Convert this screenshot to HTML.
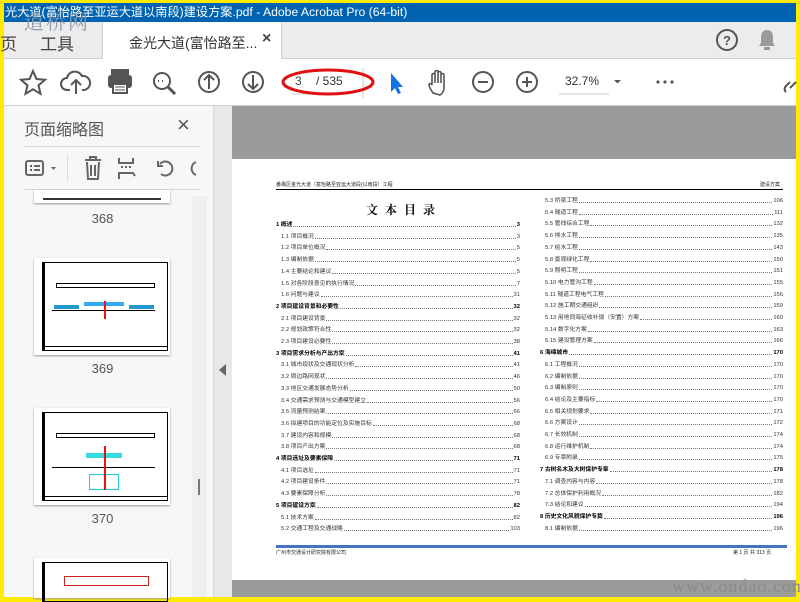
<!DOCTYPE html>
<html><head><meta charset="utf-8">
<style>
*{margin:0;padding:0;box-sizing:border-box}
body{width:800px;height:600px;overflow:hidden;background:#ffeb00;position:relative;font-family:"Liberation Sans","Noto Sans CJK SC",sans-serif}
.a{position:absolute}
.title{left:4px;top:3px;width:792px;height:19px;background:#0063b1;color:#fff;font-size:12.2px;line-height:18px;white-space:nowrap;overflow:hidden;padding-left:1px}
.tabs{left:4px;top:22px;width:792px;height:37px;background:#ececec;border-bottom:1px solid #d0d0d0}
.tool{left:4px;top:59px;width:792px;height:47px;background:#fff;border-bottom:1px solid #cfcfcf}
.panel{left:4px;top:106px;width:209px;height:491px;background:#f7f7f7}
.gut{left:213px;top:106px;width:19px;height:491px;background:#e8e8e8;border-left:1px solid #d8d8d8}
.doc{left:232px;top:106px;width:564px;height:491px;background:#9b9b9b}
.page{left:232px;top:159px;width:564px;height:421px;background:#fff}
.t{font-size:5.6px;color:#222;white-space:nowrap}
.row{position:absolute;display:flex;font-size:5.8px;color:#333;height:7px;line-height:7px;white-space:nowrap}
.row .f{flex:1;border-bottom:1px dotted #777;margin:0 1px 2px}
.row.b{font-weight:bold;color:#000}
.thumb{position:absolute;left:34px;width:136px;height:97px;background:#fff;box-shadow:0 1px 2px #999}
.lbl{position:absolute;left:80px;width:45px;text-align:center;font-size:13px;color:#555}
svg{position:absolute}
</style></head><body>
<div class="a title">光大道(富怡路至亚运大道以南段)建设方案.pdf - Adobe Acrobat Pro (64-bit)</div>
<div class="a tabs"></div>
<div class="a" style="left:24px;top:6px;font-size:20px;color:#8c9aa8;letter-spacing:2px;font-family:'Noto Serif CJK SC',serif">道桥网</div>
<div class="a" style="left:0;top:30px;font-size:17px;color:#444">页</div>
<div class="a" style="left:40px;top:30px;font-size:17px;color:#444">工具</div>
<div class="a" style="left:102px;top:22px;width:180px;height:38px;background:#fff;border-left:1px solid #d0d0d0;border-right:1px solid #d0d0d0"></div>
<div class="a" style="left:129px;top:33px;font-size:14px;color:#333">金光大道(富怡路至...</div>
<div class="a" style="left:262px;top:30px;font-size:16px;color:#444;font-weight:bold">×</div>
<svg style="left:714px;top:27px" width="26" height="26"><circle cx="13" cy="13" r="10" fill="none" stroke="#555" stroke-width="2"/><text x="13" y="18" font-size="13" font-weight="bold" text-anchor="middle" fill="#555" font-family="Liberation Sans">?</text></svg>
<svg style="left:757px;top:28px" width="20" height="24"><path d="M10 2c-4 0-6 3-6 7v6l-2 3h16l-2-3V9c0-4-2-7-6-7z" fill="#9a9a9a"/><rect x="7" y="19" width="6" height="3" fill="#9a9a9a"/></svg>
<div class="a tool"></div>
<svg style="left:0;top:62px" width="800" height="42" fill="none" stroke="#555" stroke-width="2">
<path d="M33 9l3.5 8 8.5.8-6.5 5.6 2 8.4-7.5-4.5-7.5 4.5 2-8.4-6.5-5.6 8.5-.8z"/>
<path d="M70 28h-3a6 6 0 0 1 0-12 8 8 0 0 1 15-2 6 6 0 0 1 2 14h-2M76 32V18M71 23l5-5 5 5"/>
<rect x="112" y="8" width="16" height="6" fill="#555"/><rect x="109" y="14" width="22" height="11" rx="2" fill="#555"/><rect x="113" y="22" width="14" height="9" fill="#fff"/><path d="M115 25h10M115 28h10" stroke-width="1"/>
<circle cx="162" cy="19" r="8"/><path d="M168 25l7 7" stroke-width="3"/><path d="M158 19h1M162 19h1M166 19h0" stroke-width="2"/>
<circle cx="209" cy="20" r="10"/><path d="M209 27V13M204 18l5-5 5 5"/>
<circle cx="253" cy="20" r="10"/><path d="M253 13v14M248 22l5 5 5-5"/>
<path d="M292 32h50" stroke="#ccc" stroke-width="1"/>
<path d="M363 6v30" stroke="#ccc" stroke-width="1"/>
<path d="M391 11v19l4-4 3 6 3-1-3-6h5z" fill="#1473e6" stroke="none"/>
<path d="M433 31c-2-3-4-6-4-8 0-2 2-2 3 0v-10c0-2 3-2 3 0v8-11c0-2 3-2 3 0v11-10c0-2 3-2 3 0v10-8c0-2 3-2 3 0v13c0 3-2 6-4 7z" stroke-width="1.6"/>
<circle cx="483" cy="20" r="10"/><path d="M478 20h10"/>
<circle cx="527" cy="20" r="10"/><path d="M522 20h10M527 15v10"/>
<path d="M559 32h50" stroke="#ccc" stroke-width="1"/>
<path d="M614 18h7l-3.5 3.5z" fill="#555" stroke="none"/>
<circle cx="658" cy="20" r="1.6" fill="#555" stroke="none"/><circle cx="665" cy="20" r="1.6" fill="#555" stroke="none"/><circle cx="672" cy="20" r="1.6" fill="#555" stroke="none"/>
<path d="M790 26l6-6M786 30a4 4 0 0 1 0-6l4-4"/>
<ellipse cx="328" cy="20" rx="45" ry="12" stroke="#e01010" stroke-width="3"/>
</svg>
<div class="a" style="left:295px;top:74px;font-size:12px;color:#444">3</div>
<div class="a" style="left:316px;top:74px;font-size:12px;color:#333">/ 535</div>
<div class="a" style="left:565px;top:74px;font-size:12px;color:#333">32.7%</div>
<div class="a panel"></div>
<div class="a" style="left:24px;top:116px;font-size:16px;color:#555">页面缩略图</div>
<div class="a" style="left:177px;top:112px;font-size:22px;color:#555">×</div>
<div class="a" style="left:24px;top:146px;width:176px;height:1px;background:#d8d8d8"></div>
<div class="a" style="left:24px;top:189px;width:176px;height:1px;background:#d8d8d8"></div>
<div class="a" style="left:67px;top:155px;width:1px;height:26px;background:#d8d8d8"></div>
<svg style="left:20px;top:154px" width="190" height="30" fill="none" stroke="#666" stroke-width="2">
<rect x="6" y="7" width="17" height="14" rx="2"/><path d="M10 12h2M10 16h2M14 12h6M14 16h6"/>
<path d="M31 13h5l-2.5 3z" fill="#666" stroke="none"/>
<path d="M65 6h16M70 6V3h6v3M67 8l1 17h10l1-17M71 11v11M75 11v11"/>
<path d="M99 4v5h14V4M99 25v-6h14l2 3M101 13h2M105 13h2M109 13h2"/>
<path d="M141 20a7 7 0 1 0 -1-10M138 7v5h5"/>
<path d="M176 21a7 7 0 0 1 0-13"/>
</svg>
<div class="a" style="left:192px;top:196px;width:15px;height:401px;background:#efefef"></div>
<div class="a" style="left:198px;top:479px;width:2px;height:16px;background:#777"></div>
<div class="thumb" style="top:190px;height:13px"><div style="position:absolute;left:9px;top:8px;width:118px;height:2px;background:#333"></div></div>
<div class="lbl" style="top:211px">368</div>
<div class="thumb" style="top:258px">
<div style="position:absolute;left:8px;top:4px;width:126px;height:89px;border:1px solid #000;border-left:3px solid #000"></div>
<div style="position:absolute;left:22px;top:25px;width:99px;height:5px;border:1px solid #000"></div>
<div style="position:absolute;left:18px;top:52px;width:103px;height:1px;background:#000"></div>
<div style="position:absolute;left:50px;top:44px;width:40px;height:4px;background:#3ae"></div>
<div style="position:absolute;left:20px;top:47px;width:25px;height:4px;background:#29c"></div>
<div style="position:absolute;left:95px;top:47px;width:25px;height:4px;background:#29c"></div>
<div style="position:absolute;left:70px;top:43px;width:2px;height:18px;background:#e11"></div>
<div style="position:absolute;left:8px;top:88px;width:126px;height:5px;border-top:1px solid #000"></div>
</div>
<div class="lbl" style="top:361px">369</div>
<div class="thumb" style="top:408px">
<div style="position:absolute;left:8px;top:4px;width:126px;height:89px;border:1px solid #000;border-left:3px solid #000"></div>
<div style="position:absolute;left:22px;top:25px;width:99px;height:5px;border:1px solid #000"></div>
<div style="position:absolute;left:18px;top:59px;width:103px;height:1px;background:#000"></div>
<div style="position:absolute;left:52px;top:45px;width:36px;height:5px;background:#3dd"></div>
<div style="position:absolute;left:55px;top:66px;width:30px;height:16px;border:1px solid #2cd"></div>
<div style="position:absolute;left:70px;top:38px;width:2px;height:44px;background:#e11"></div>
<div style="position:absolute;left:8px;top:88px;width:126px;height:5px;border-top:1px solid #000"></div>
</div>
<div class="lbl" style="top:511px">370</div>
<div class="thumb" style="top:558px;height:40px"><div style="position:absolute;left:8px;top:4px;width:126px;height:40px;border:1px solid #000;border-left:3px solid #000"></div><div style="position:absolute;left:30px;top:18px;width:85px;height:10px;border:1px solid #c22"></div></div>
<div class="a gut"></div>
<svg style="left:218px;top:363px" width="10" height="14"><path d="M8 1v12L1 7z" fill="#666"/></svg>
<div class="a doc"></div>
<div class="a page"></div>
<div class="a t" style="left:276px;top:181px;font-size:5px">番禺区金光大道（富怡路至亚运大道段(以南段）工程</div>
<div class="a t" style="left:760px;top:181px;font-size:5px">建设方案</div>
<div class="a" style="left:276px;top:189px;width:507px;height:1px;background:#000"></div>
<div class="a" style="left:366px;top:201px;font-size:12px;font-weight:bold;letter-spacing:7px;color:#111;font-family:'Noto Serif CJK SC',serif">文本目录</div>
<div class="a" style="left:276px;top:545px;width:511px;height:3px;background:#4472c4"></div>
<div class="a t" style="left:276px;top:549px;font-size:5px">广州市交通设计研究院有限公司</div>
<div class="a t" style="left:733px;top:549px;font-size:5px">第 1 页 共 313 页</div>
<div class="a" style="left:672px;top:576px;font-size:18px;color:#8a8a8a;font-family:'Liberation Serif',serif;letter-spacing:1px">www.ondao.com</div>
<div id="L"></div>
<script>
var L=[["1 概述","3",1],["1.1 项目概况","3"],["1.2 项目单位概况","5"],["1.3 编制依据","5"],["1.4 主要结论和建议","5"],["1.5 对各阶段意见的执行情况","7"],["1.6 问题与建议","31"],["2 项目建设背景和必要性","32",1],["2.1 项目建设背景","32"],["2.2 规划政策符合性","32"],["2.3 项目建设必要性","38"],["3 项目需求分析与产出方案","41",1],["3.1 城市现状及交通现状分析","41"],["3.2 周边路网现状","46"],["3.3 地区交通发展态势分析","50"],["3.4 交通需求预测与交通模型建立","56"],["3.5 流量预测结果","66"],["3.6 拟建项目的功能定位及实施目标","68"],["3.7 建设内容和规模","68"],["3.8 项目产出方案","68"],["4 项目选址及要素保障","71",1],["4.1 项目选址","71"],["4.2 项目建设条件","71"],["4.3 要素保障分析","78"],["5 项目建设方案","82",1],["5.1 技术方案","82"],["5.2 交通工程及交通战略","103"]];
var R=[["5.3 桥梁工程","106"],["5.4 隧道工程","111"],["5.5 管线综合工程","132"],["5.6 排水工程","135"],["5.7 给水工程","143"],["5.8 景观绿化工程","150"],["5.9 照明工程","151"],["5.10 电力管沟工程","155"],["5.11 隧道工程电气工程","156"],["5.12 施工期交通组织","159"],["5.13 用地同海征收补偿（安置）方案","160"],["5.14 数字化方案","163"],["5.15 建设管理方案","166"],["6 海绵城市","170",1],["6.1 工程概况","170"],["6.2 编制依据","170"],["6.3 编制原则","170"],["6.4 结论及主要指标","170"],["6.5 相关规划要求","171"],["6.6 方案设计","172"],["6.7 长效机制","174"],["6.8 运行维护机制","174"],["6.9 专章附录","175"],["7 古树名木及大树保护专章","178",1],["7.1 调查内容与内容","178"],["7.2 总体保护利用概况","182"],["7.3 结论和建议","194"],["8 历史文化风貌保护专篇","196",1],["8.1 编制依据","196"]];
var h="";
function f(a,x0,x1,y0){a.forEach(function(e,i){var ind=e[2]?0:5;h+='<div class="row'+(e[2]?' b':'')+'" style="left:'+(x0+ind)+'px;width:'+(x1-x0-ind)+'px;top:'+(y0+i*11.7-3)+'px"><span>'+e[0]+'</span><span class="f"></span><span>'+e[1]+'</span></div>';});}
f(L,276,520,225);f(R,540,783,201);
document.getElementById("L").innerHTML=h;
</script>
</body></html>
